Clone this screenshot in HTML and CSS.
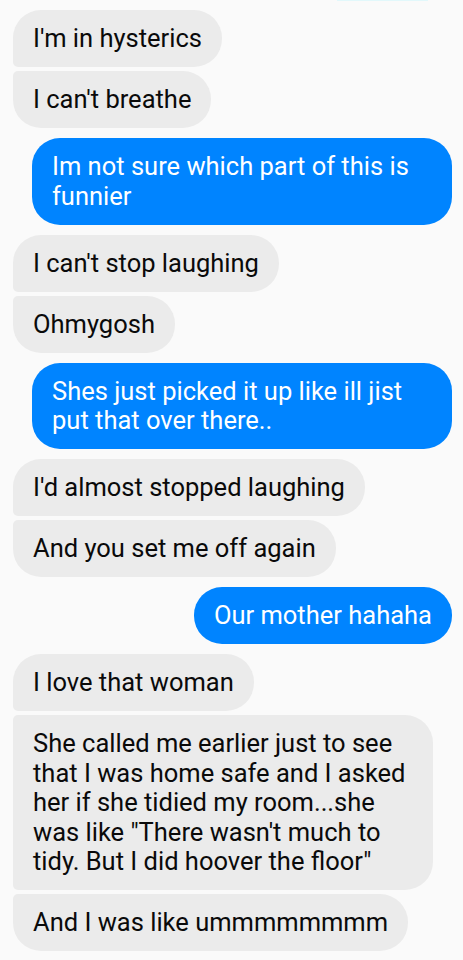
FILE: index.html
```html
<!DOCTYPE html>
<html>
<head>
<meta charset="utf-8">
<link rel="stylesheet" href="styles.css">
</head>
<body>
<div class="topline"></div>
<div class="chat">
  <div class="group in">
    <div class="msg first">I'm in hysterics</div>
    <div class="msg last">I can't breathe</div>
  </div>
  <div class="group out">
    <div class="msg single">Im not sure which part of this is funnier</div>
  </div>
  <div class="group in">
    <div class="msg first">I can't stop laughing</div>
    <div class="msg last">Ohmygosh</div>
  </div>
  <div class="group out">
    <div class="msg single">Shes just picked it up like ill jist put that over there..</div>
  </div>
  <div class="group in">
    <div class="msg first">I'd almost stopped laughing</div>
    <div class="msg last">And you set me off again</div>
  </div>
  <div class="group out">
    <div class="msg single">Our mother hahaha</div>
  </div>
  <div class="group in">
    <div class="msg first">I love that woman</div>
    <div class="msg mid">She called me earlier just to see that I was home safe and I asked her if she tidied my room...she was like "There wasn't much to tidy. But I did hoover the floor"</div>
    <div class="msg last">And I was like ummmmmmmm</div>
  </div>
</div>
</body>
</html>
```
FILE: styles.css
```css
html, body {
  margin: 0;
  padding: 0;
  background: #fafafa;
}
body {
  font-family: Roboto, "Noto Sans", sans-serif;
  font-size: 25.5px;
  line-height: 29.5px;
  position: relative;
}
.topline {
  position: absolute;
  top: 0;
  left: 337px;
  width: 91px;
  height: 1px;
  background: #e2f8fb;
}
.chat {
  display: flex;
  flex-direction: column;
  gap: 10px;
  padding: 10px 11px 0 13px;
}
.group {
  display: flex;
  flex-direction: column;
  gap: 4px;
}
.group.in { align-items: flex-start; }
.group.out { align-items: flex-end; }
.msg {
  max-width: 380px;
  padding: 14px 20px 13.5px;
  border-radius: 28px;
  box-sizing: content-box;
}
.in .msg {
  background: #ebebeb;
  color: #0a0a0a;
}
.out .msg {
  background: #0084ff;
  color: #ffffff;
}
.in .first { border-bottom-left-radius: 5px; }
.in .mid { border-top-left-radius: 5px; border-bottom-left-radius: 5px; }
.in .last { border-top-left-radius: 5px; }
```
